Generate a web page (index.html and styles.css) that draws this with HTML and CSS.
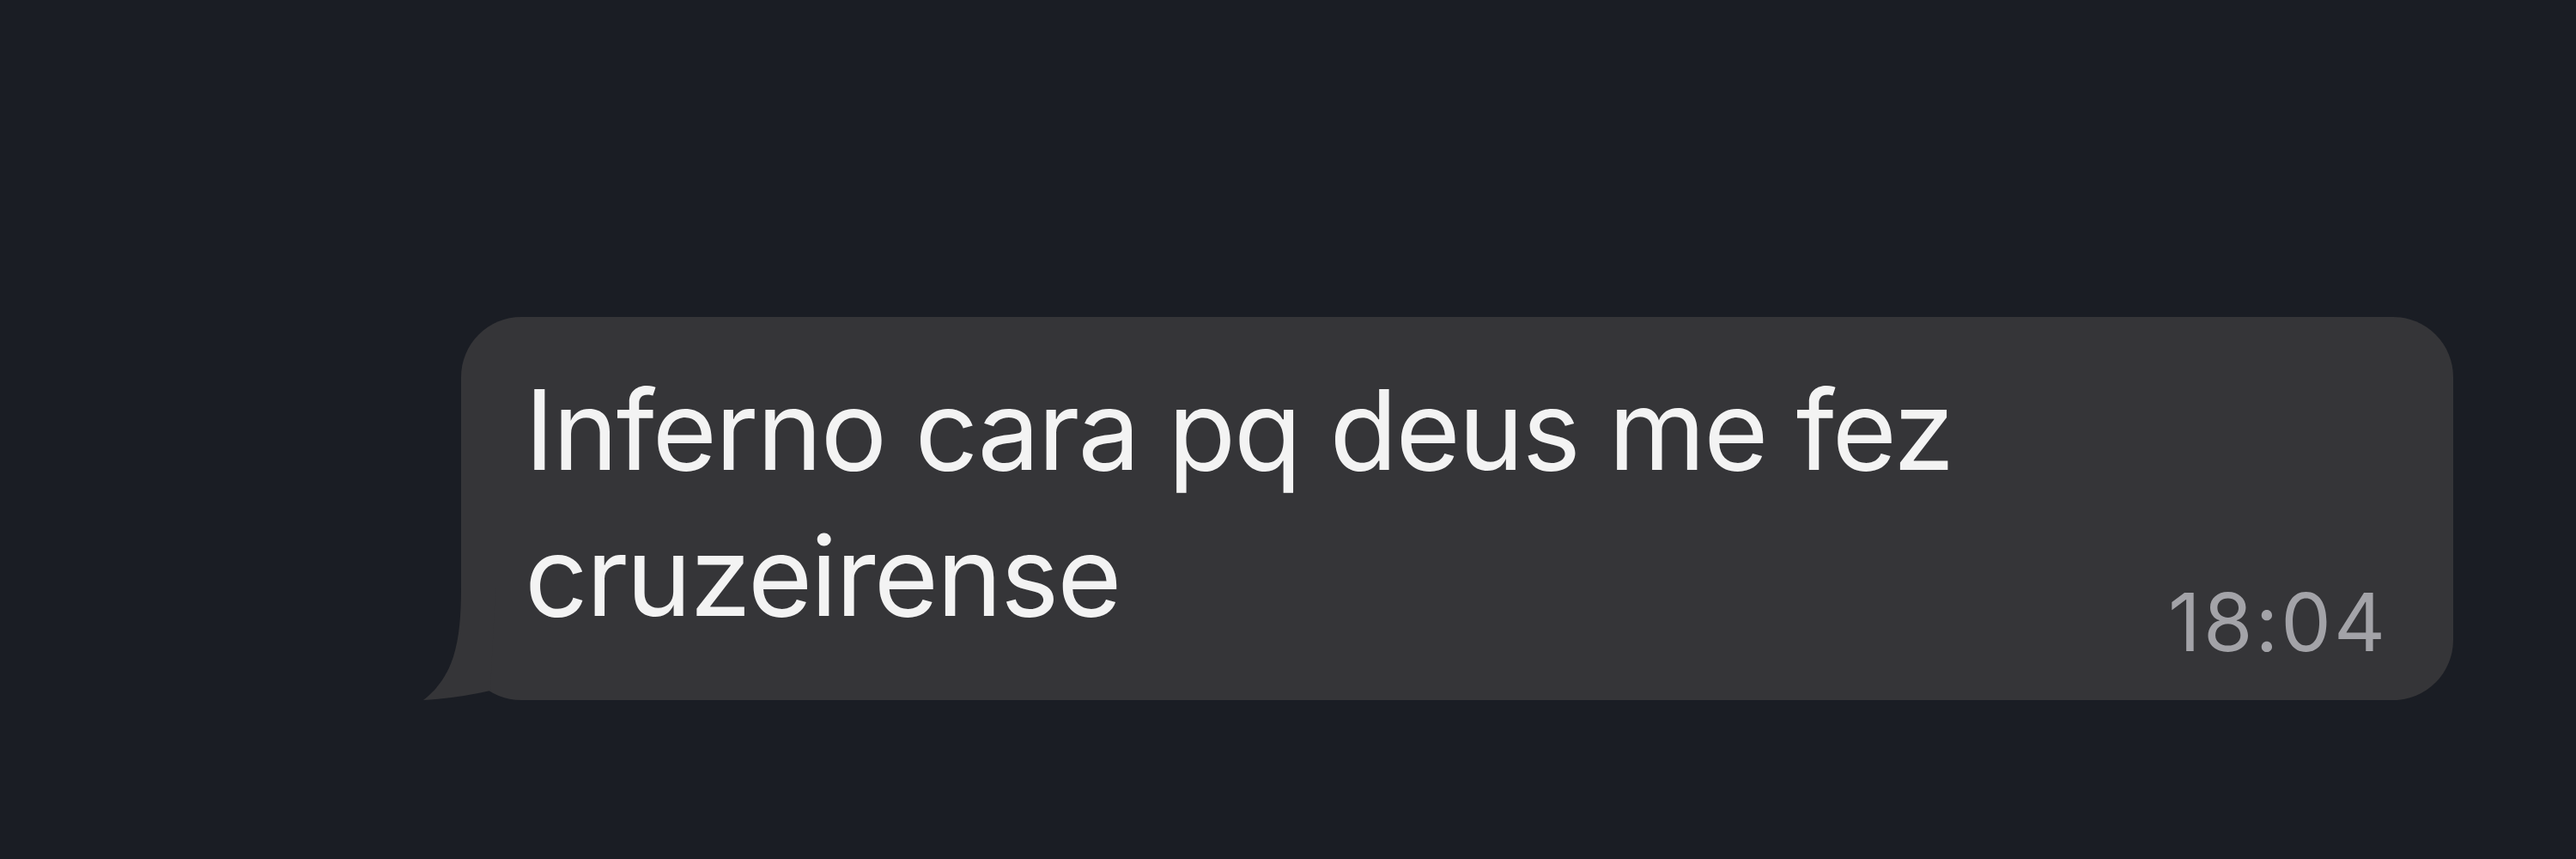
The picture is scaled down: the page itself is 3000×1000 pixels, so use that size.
FILE: index.html
```html
<!DOCTYPE html>
<html lang="pt">
<head>
<meta charset="utf-8">
<title>Mensagem</title>
<link rel="stylesheet" href="styles.css">
</head>
<body>
<main class="chat">
  <div class="bubble">
    <p class="text">Inferno cara pq deus me fez cruzeirense</p>
    <span class="time">18:04</span>
    <svg class="tail" width="90" height="130" viewBox="0 0 90 130" aria-hidden="true">
      <path d="M50,0 C50,62 42,102 6,130 Q45,128 84,119 L90,0 Z" fill="#353538"/>
    </svg>
  </div>
</main>
</body>
</html>
```

FILE: styles.css
```css
html, body {
  margin: 0;
  padding: 0;
  background: #1a1d24;
}

.chat {
  width: 3000px;
  height: 1000px;
  box-sizing: border-box;
  padding: 369px 0 0 537px;
  font-family: Inter, "Noto Sans", "Liberation Sans", sans-serif;
}

.bubble {
  position: relative;
  width: 2320px;
  box-sizing: border-box;
  padding: 46px 76px 60px 74px;
  background: #353538;
  border-radius: 70px;
  display: flex;
  justify-content: space-between;
  align-items: flex-start;
}

.text {
  margin: 0;
  max-width: 1800px;
  font-size: 129px;
  line-height: 170px;
  color: #f3f3f3;
  letter-spacing: -2px;
}

.time {
  align-self: flex-end;
  margin-bottom: -16px;
  font-size: 93px;
  line-height: 93px;
  color: #a3a3a8;
  letter-spacing: 3px;
  white-space: nowrap;
}

.tail {
  position: absolute;
  left: -50px;
  bottom: 0;
  display: block;
}
```
